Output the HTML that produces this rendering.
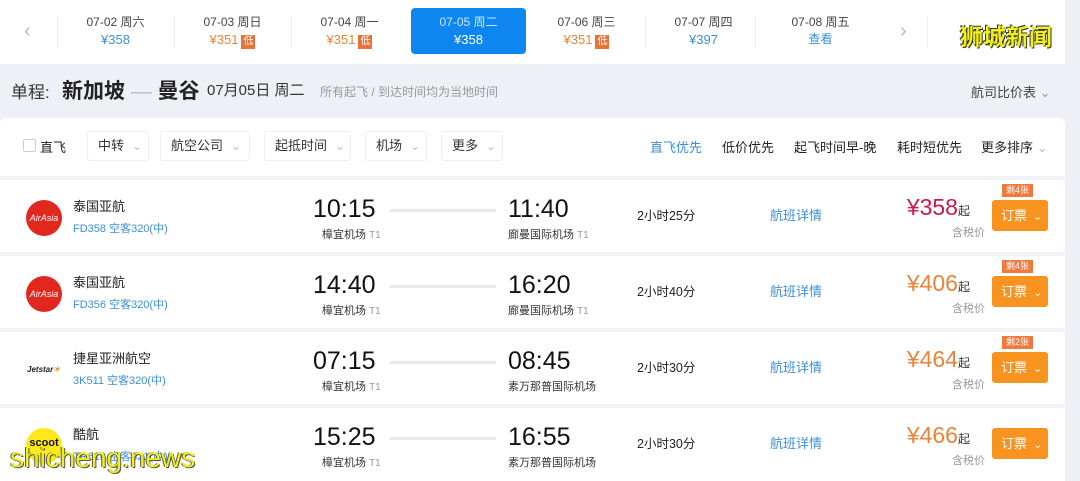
<!DOCTYPE html>
<html><head><meta charset="utf-8"><style>
*{margin:0;padding:0;box-sizing:border-box}
body{width:1080px;height:481px;overflow:hidden;background:#eff0f5;font-family:"Liberation Sans","Noto Sans CJK SC",sans-serif;position:relative;color:#222}
.a{position:absolute;white-space:nowrap}
.top{left:0;top:0;width:1065px;height:64px;background:#fff}
.d{position:absolute;top:14px;width:117px;text-align:center;font-size:12px;color:#444;line-height:17px}
.d b{display:block;font-weight:normal;font-size:13px}
.low{display:inline-block;background:#e8733a;color:#fff;font-size:10px;padding:0 2px;line-height:14px;margin-left:3px}
.sep{position:absolute;top:16px;width:1px;height:32px;background:#eee}
.panel{left:0;top:118px;width:1065px;height:363px;background:#fff;border-radius:6px 6px 0 0}
.btn{position:absolute;top:131px;height:30px;border:1px solid #eee;border-radius:3px;font-size:13px;line-height:28px;padding-left:10px;color:#333}
.btn:after{content:"⌄";color:#bbb;margin-left:8px;font-size:12px}
.row{position:absolute;left:0;width:1065px;height:76px;border-top:4px solid #f3f4f7}
.logo{position:absolute;left:26px;top:20px;width:36px;height:36px;border-radius:50%;background:#e0281f;color:#fff;font-size:9px;font-style:italic;text-align:center;line-height:36px}
.nm{position:absolute;left:73px;top:16px;font-size:13px;color:#222}
.fn{position:absolute;left:73px;top:40px;font-size:11px;color:#3d8fd6}
.t{position:absolute;top:15px;font-size:25px;color:#111}
.ap{position:absolute;top:46px;font-size:11px;color:#333}
.ap i{font-style:normal;color:#999;font-size:10px}
.line{position:absolute;left:390px;top:29px;width:106px;height:3px;background:#e8e8ec}
.dur{position:absolute;left:637px;top:25px;font-size:12.5px}
.det{position:absolute;left:770px;top:25px;font-size:13px;color:#3d8fd6}
.pr{position:absolute;right:95px;top:14px;font-size:23px}
.pr small{font-size:12px;color:#333}
.tax{position:absolute;left:952px;top:44px;font-size:11px;color:#999}
.bk{position:absolute;left:992px;top:20px;width:56px;height:31px;background:#f7931e;border-radius:3px;color:#fff;font-size:13px;line-height:31px;padding-left:9px}
.bk:after{content:"⌄";margin-left:6px;font-size:11px}
.tag{position:absolute;left:1002px;top:4px;background:#ef7a3b;color:#fff;font-size:9px;padding:0 4px;line-height:13px}
</style></head><body>
<div class="a top"></div>
<div class="a" style="left:24px;top:20px;color:#bbb;font-size:20px">‹</div>
<div class="sep" style="left:57px"></div>
<div class="d" style="left:57px">07-02 周六<b style="color:#3d8fd6">¥358</b></div>
<div class="sep" style="left:174px"></div>
<div class="d" style="left:174px">07-03 周日<b style="color:#e8833a">¥351<span class="low">低</span></b></div>
<div class="sep" style="left:291px"></div>
<div class="d" style="left:291px">07-04 周一<b style="color:#e8833a">¥351<span class="low">低</span></b></div>
<div class="a" style="left:411px;top:8px;width:115px;height:46px;background:#0d86f0;border-radius:4px"></div>
<div class="d" style="left:411px;width:115px;color:#cfe6ff">07-05 周二<b style="color:#fff">¥358</b></div>
<div class="d" style="left:528px">07-06 周三<b style="color:#e8833a">¥351<span class="low">低</span></b></div>
<div class="sep" style="left:645px"></div>
<div class="d" style="left:645px">07-07 周四<b style="color:#3d8fd6">¥397</b></div>
<div class="sep" style="left:755px"></div>
<div class="d" style="left:762px">07-08 周五<b style="color:#3d8fd6;font-size:12px">查看</b></div>
<div class="a" style="left:900px;top:20px;color:#bbb;font-size:20px">›</div>
<div class="sep" style="left:927px"></div>
<div class="a" style="left:960px;top:18px;font-size:23px;font-weight:bold;color:#f2f01a;text-shadow:1px 1px 0 #333,-1px -1px 0 #333">狮城新闻</div>

<div class="a" style="left:11px;top:78px;font-size:17px;color:#333">单程:</div>
<div class="a" style="left:62px;top:75px;font-size:21px;font-weight:bold;color:#222">新加坡 <span style="color:#bbb;font-weight:normal">—</span> 曼谷</div>
<div class="a" style="left:207px;top:79px;font-size:15px;color:#333">07月05日 周二</div>
<div class="a" style="left:320px;top:83px;font-size:12px;color:#999">所有起飞 / 到达时间均为当地时间</div>
<div class="a" style="left:971px;top:82px;font-size:13px;color:#444">航司比价表 <span style="color:#999">⌄</span></div>

<div class="a panel"></div>
<div class="a" style="left:23px;top:139px;width:13px;height:13px;border:1px solid #ccc;border-radius:2px"></div>
<div class="a" style="left:40px;top:137px;font-size:13px">直飞</div>
<div class="btn" style="left:87px;width:62px">中转</div>
<div class="btn" style="left:160px;width:90px">航空公司</div>
<div class="btn" style="left:264px;width:87px">起抵时间</div>
<div class="btn" style="left:365px;width:62px">机场</div>
<div class="btn" style="left:441px;width:62px">更多</div>
<div class="a" style="left:650px;top:137px;font-size:13px;color:#3d8fd6">直飞优先</div>
<div class="a" style="left:722px;top:137px;font-size:13px">低价优先</div>
<div class="a" style="left:794px;top:137px;font-size:13px">起飞时间早-晚</div>
<div class="a" style="left:897px;top:137px;font-size:13px">耗时短优先</div>
<div class="a" style="left:981px;top:137px;font-size:13px">更多排序 <span style="color:#bbb">⌄</span></div>

<div class="row" style="top:176px">
<div class="logo">AirAsia</div><div class="nm">泰国亚航</div><div class="fn">FD358 空客320(中)</div>
<div class="t" style="left:313px">10:15</div><div class="line"></div><div class="t" style="left:508px">11:40</div>
<div class="ap" style="left:322px">樟宜机场 <i>T1</i></div><div class="ap" style="left:508px">廊曼国际机场 <i>T1</i></div>
<div class="dur">2小时25分</div><div class="det">航班详情</div>
<div class="pr" style="color:#c8194b">¥358<small>起</small></div><div class="tax">含税价</div>
<div class="tag">剩4张</div><div class="bk">订票</div></div>

<div class="row" style="top:252px">
<div class="logo">AirAsia</div><div class="nm">泰国亚航</div><div class="fn">FD356 空客320(中)</div>
<div class="t" style="left:313px">14:40</div><div class="line"></div><div class="t" style="left:508px">16:20</div>
<div class="ap" style="left:322px">樟宜机场 <i>T1</i></div><div class="ap" style="left:508px">廊曼国际机场 <i>T1</i></div>
<div class="dur">2小时40分</div><div class="det">航班详情</div>
<div class="pr" style="color:#e8833a">¥406<small>起</small></div><div class="tax">含税价</div>
<div class="tag">剩4张</div><div class="bk">订票</div></div>

<div class="row" style="top:328px">
<div class="a" style="left:27px;top:33px;font-size:8px;font-weight:bold;font-style:italic">Jetstar<span style="color:#f7931e">✶</span></div><div class="nm">捷星亚洲航空</div><div class="fn">3K511 空客320(中)</div>
<div class="t" style="left:313px">07:15</div><div class="line"></div><div class="t" style="left:508px">08:45</div>
<div class="ap" style="left:322px">樟宜机场 <i>T1</i></div><div class="ap" style="left:508px">素万那普国际机场</div>
<div class="dur">2小时30分</div><div class="det">航班详情</div>
<div class="pr" style="color:#e8833a">¥464<small>起</small></div><div class="tax">含税价</div>
<div class="tag">剩2张</div><div class="bk">订票</div></div>

<div class="row" style="top:404px">
<div class="logo" style="background:#ffe81a;color:#111;font-style:normal;font-weight:bold;font-size:11px;line-height:30px">scoot</div><div class="nm">酷航</div><div class="fn">TR610 空客321(中)</div>
<div class="t" style="left:313px">15:25</div><div class="line"></div><div class="t" style="left:508px">16:55</div>
<div class="ap" style="left:322px">樟宜机场 <i>T1</i></div><div class="ap" style="left:508px">素万那普国际机场</div>
<div class="dur">2小时30分</div><div class="det">航班详情</div>
<div class="pr" style="color:#e8833a">¥466<small>起</small></div><div class="tax">含税价</div>
<div class="bk">订票</div></div>

<div class="a" style="left:10px;top:442px;font-size:28px;color:#f2f01a;text-shadow:1px 1px 0 #555,-1px 0 0 #555">shicheng.news</div>
</body></html>
